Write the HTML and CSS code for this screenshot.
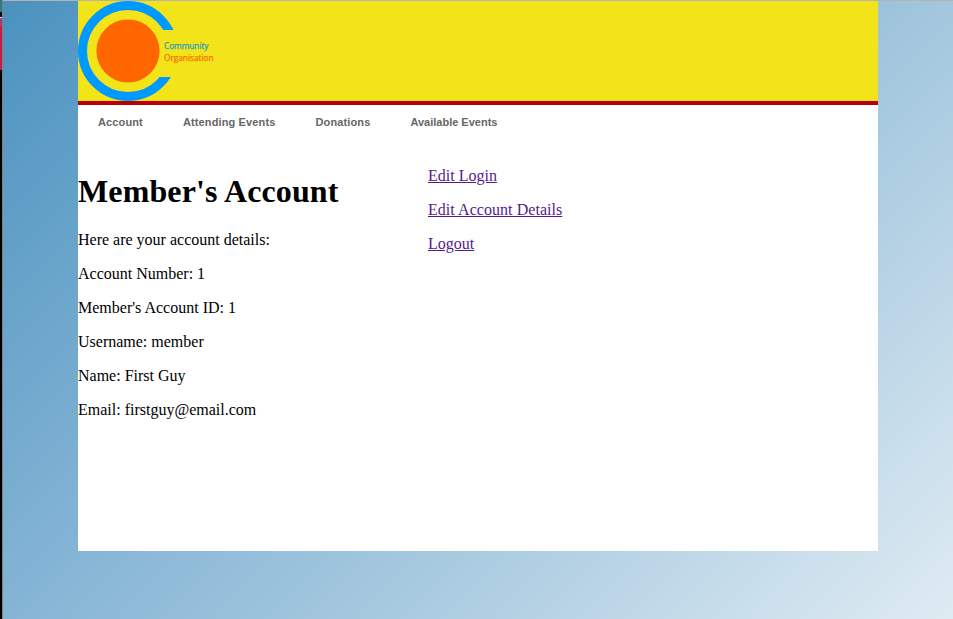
FILE: index.html
```html
<!DOCTYPE html>
<html lang="en">
<head>
<meta charset="utf-8">
<title>Member's Account</title>
<link rel="stylesheet" href="styles.css">
</head>
<body>
<div class="edge"><span class="edge-teal"></span><span class="edge-dark"></span><span class="edge-light"></span><span class="edge-mauve"></span><span class="edge-red"></span></div>
<div class="viewport">
  <div class="page">
    <header class="header">
      <svg class="logo" width="150" height="100" viewBox="0 0 150 100" role="img">
        <defs><clipPath id="ring"><path d="M0 0H150V29H50V76H150V100H0Z"/><path d="M0 0H50V100H0Z"/></clipPath></defs>
        <circle cx="50" cy="50" r="45.5" fill="none" stroke="#0099ff" stroke-width="9" clip-path="url(#ring)"/>
        <circle cx="50" cy="50" r="31.6" fill="#ff6600"/>
        <text class="logo-text logo-top" x="86" y="48" textLength="44.5">Community</text>
        <text class="logo-text logo-bottom" x="86" y="59.6" textLength="49.5">Organisation</text>
      </svg>
    </header>
    <nav class="nav">
      <a>Account</a><a>Attending Events</a><a>Donations</a><a class="last">Available Events</a>
    </nav>
    <main class="content">
      <section class="details">
        <h1>Member's Account</h1>
        <p>Here are your account details:</p>
        <p>Account Number: 1</p>
        <p>Member's Account ID: 1</p>
        <p>Username: member</p>
        <p>Name: First Guy</p>
        <p>Email: firstguy@email.com</p>
      </section>
      <section class="links">
        <p><a href="#">Edit Login</a></p>
        <p><a class="wide" href="#">Edit Account Details</a></p>
        <p><a href="#">Logout</a></p>
      </section>
    </main>
  </div>
</div>
</body>
</html>
```
FILE: styles.css
```css
* { box-sizing: border-box; }
body {
  margin: 0;
  height: 619px;
  display: flex;
  overflow: hidden;
  font-family: "Liberation Serif", "Times New Roman", serif;
  font-size: 16px;
  color: #000;
}
.edge {
  width: 3px;
  flex: none;
  display: flex;
  flex-direction: column;
  background: #000;
  border-right: 1px solid #85807f;
}
.edge-teal { height: 12px; background: #267f83; }
.edge-dark { height: 5px; background: #080818; }
.edge-light { height: 1px; background: #e8dce0; }
.edge-mauve { height: 8px; background: #a0407c; }
.edge-red { height: 44px; background: #c81c44; }
.viewport {
  flex: 1;
  border-top: 1px solid #b4b4b4;
  background: linear-gradient(135deg, #4b92bf 0%, #84b4d5 39%, #a3c7de 61%, #dfebf3 100%);
}
.page {
  width: 800px;
  height: 550px;
  margin-left: 75px;
  background: #fff;
}
.header {
  height: 104px;
  background: #f3e419;
  border-bottom: 4px solid #b70000;
}
.logo { display: block; }
.logo-text { font-family: "Open Sans", sans-serif; font-size: 8.3px; stroke-width: .25px; }
.logo-top { fill: #1f9fc0; stroke: #1f9fc0; }
.logo-bottom { fill: #fb7008; stroke: #fb7008; }
.nav {
  height: 34px;
  padding: 0 20px;
  display: flex;
  gap: 40px;
  font: bold 11px/34px "Liberation Sans", Arial, sans-serif;
  letter-spacing: .13px;
  color: #666;
}
.nav .last { letter-spacing: 0; }
.content { display: flex; padding-top: 12px; }
.details { width: 350px; }
h1 { margin: 21px 0; font-size: 32px; line-height: 38px; letter-spacing: .12px; }
p { margin: 16px 0; line-height: 18px; }
.links a { color: #551a8b; }
.links .wide { letter-spacing: .05px; }
```
